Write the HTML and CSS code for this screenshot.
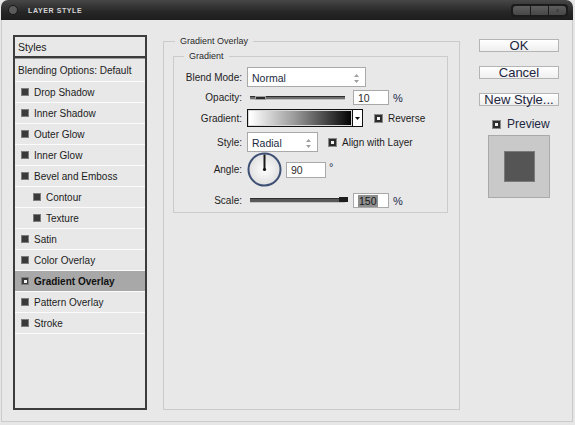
FILE: index.html
```html
<!DOCTYPE html>
<html lang="en">
<head>
  <meta charset="UTF-8" />
  <title>Layer Style</title>
  <link rel="stylesheet" href="styles.css">
</head>
<body>

<div class="window">
  <div class="titlebar">
    <span class="title-dot"></span>
    <span class="title">LAYER STYLE</span>
    <div class="win-buttons">
      <span></span><span></span><span class="close">x</span>
    </div>
  </div>

  <div class="content">

    <!-- effect list -->
    <div class="styles-list">
      <div class="list-head">Styles</div>
      <div class="list-blend">Blending Options: Default</div>
      <div class="list-item"><span class="mark"></span>Drop Shadow</div>
      <div class="list-item"><span class="mark"></span>Inner Shadow</div>
      <div class="list-item"><span class="mark"></span>Outer Glow</div>
      <div class="list-item"><span class="mark"></span>Inner Glow</div>
      <div class="list-item"><span class="mark"></span>Bevel and Emboss</div>
      <div class="list-item sub"><span class="mark"></span>Contour</div>
      <div class="list-item sub"><span class="mark"></span>Texture</div>
      <div class="list-item"><span class="mark"></span>Satin</div>
      <div class="list-item"><span class="mark"></span>Color Overlay</div>
      <div class="list-item active"><span class="mark on"></span>Gradient Overlay</div>
      <div class="list-item"><span class="mark"></span>Pattern Overlay</div>
      <div class="list-item"><span class="mark"></span>Stroke</div>
    </div>

    <fieldset class="group outer">
      <legend>Gradient Overlay</legend>
      <fieldset class="group inner">
        <legend>Gradient</legend>

        <div class="field row-blend">
          <label>Blend Mode:</label>
          <div class="select select-wide">Normal
            <svg class="updown" width="5" height="9" viewBox="0 0 5 9"><path d="M2.5 0L5 3H0zM2.5 9L5 6H0z" fill="#a0a0a0"/></svg>
          </div>
        </div>

        <div class="field row-slider">
          <label>Opacity:</label>
          <div class="track"><span class="thumb"></span></div>
          <div class="num">10</div>
          <span class="unit">%</span>
        </div>

        <div class="field row-gradient">
          <label>Gradient:</label>
          <div class="swatch"></div>
          <div class="swatch-arrow">
            <svg width="5" height="3" viewBox="0 0 5 3"><path d="M0 0h5L2.5 3z" fill="#111"/></svg>
          </div>
          <span class="check on"></span>
          <span class="check-label">Reverse</span>
        </div>

        <div class="field row-style">
          <label>Style:</label>
          <div class="select select-narrow">Radial
            <svg class="updown" width="5" height="9" viewBox="0 0 5 9"><path d="M2.5 0L5 3H0zM2.5 9L5 6H0z" fill="#a0a0a0"/></svg>
          </div>
          <span class="check on check-align"></span>
          <span class="check-label">Align with Layer</span>
        </div>

        <div class="field row-angle">
          <label>Angle:</label>
          <svg class="dial" width="35" height="35" viewBox="0 0 35 35">
            <defs>
              <radialGradient id="dialFill" cx="50%" cy="50%" r="55%">
                <stop offset="0" stop-color="#ffffff"/>
                <stop offset="1" stop-color="#dcdcdc"/>
              </radialGradient>
            </defs>
            <circle cx="17.5" cy="17.5" r="16" fill="url(#dialFill)" stroke="#3e5174" stroke-width="2"/>
            <line x1="17.5" y1="17.5" x2="17.5" y2="2.5" stroke="#1a1a1a" stroke-width="2"/>
            <circle cx="17.5" cy="17.5" r="1.6" fill="#111"/>
          </svg>
          <div class="num num-angle">90</div>
          <span class="degree">°</span>
        </div>

        <div class="field row-slider row-scale">
          <label>Scale:</label>
          <div class="track thick"><span class="thumb thumb-end"></span></div>
          <div class="num"><span class="selected">150</span></div>
          <span class="unit">%</span>
        </div>

      </fieldset>
    </fieldset>

    <!-- dialog buttons and preview -->
    <div class="actions">
      <div class="btn">OK</div>
      <div class="btn">Cancel</div>
      <div class="btn">New Style...</div>
      <div class="preview-toggle"><span class="check on"></span>Preview</div>
      <div class="preview-box"><div class="preview-square"></div></div>
    </div>

  </div>
</div>

</body>
</html>
```

FILE: styles.css
```css
* {
  box-sizing: border-box;
}

html, body {
  margin: 0;
  padding: 0;
}

body {
  background: #e6e6e6;
  font-family: "Liberation Sans", Arial, sans-serif;
  color: #1c1c1c;
  font-size: 10px;
}

.window {
  width: 572px;
  margin-left: 1px;
}

/* dark title strip */
.titlebar {
  height: 20px;
  background: linear-gradient(to bottom, #474747, #262626 60%, #1d1d1d);
  border-radius: 7px 7px 0 0;
  display: flex;
  align-items: center;
  padding-left: 7px;
}

.title-dot {
  width: 10px;
  height: 10px;
  border-radius: 50%;
  background: #5b5b5b;
  border: 1px solid #1a1a1a;
}

.title {
  margin-left: 10px;
  color: #d6d6d6;
  font-size: 7px;
  font-weight: bold;
  letter-spacing: 0.6px;
}

.win-buttons {
  margin-left: auto;
  margin-right: 5px;
  display: flex;
  gap: 1px;
  padding: 2px;
  background: #1b1b1b;
  border-radius: 4px;
}

.win-buttons span {
  width: 17px;
  height: 9px;
  background: linear-gradient(to bottom, #5e5e5e, #474747);
  font-size: 6px;
  line-height: 9px;
  text-align: center;
  color: #2a2a2a;
}

.win-buttons span:first-child {
  border-radius: 3px 0 0 3px;
}

.win-buttons span.close {
  border-radius: 0 3px 3px 0;
}

.content {
  height: 402px;
  background: #e8e8e8;
  border: 1px solid #cbcbcb;
  border-top: none;
  display: flex;
  align-items: flex-start;
  padding: 15px 0 0 11px;
}

/* left effect list */
.styles-list {
  width: 134px;
  height: 375px;
  border: 2px solid #3c3c3c;
  background: #e8e8e8;
}

.list-head {
  height: 21px;
  line-height: 21px;
  padding-left: 3px;
  font-size: 10.5px;
  border-bottom: 2px solid #3c3c3c;
}

.list-blend {
  height: 24px;
  line-height: 24px;
  padding-left: 3px;
  border-top: 1px solid #9a9a9a;
  border-bottom: 1px solid #fbfbfb;
}

.list-item {
  height: 21px;
  display: flex;
  align-items: center;
  padding-left: 6px;
  border-bottom: 1px solid #fbfbfb;
}

.list-item.sub {
  padding-left: 18px;
}

.list-item.active {
  background: #a8a8a8;
  font-weight: bold;
  color: #111;
}

.mark {
  width: 8px;
  height: 8px;
  margin-right: 5px;
  background: #3a3a3a;
  border: 1px solid #7c7c7c;
  display: inline-flex;
  align-items: center;
  justify-content: center;
}

.mark.on::after,
.check.on::after {
  content: "";
  width: 3px;
  height: 3px;
  background: #f2f2f2;
}

/* group boxes */
.group {
  margin: 0;
  min-width: 0;
  border: 1px solid #cbcbcb;
}

.group legend {
  padding: 0 5px;
  font-size: 9px;
  line-height: 12px;
  color: #2a2a2a;
}

.group.outer {
  margin-left: 16px;
  width: 297px;
  height: 375px;
  padding: 3px 11px 0 9px;
}

.group.outer > legend {
  margin-left: 2px;
}

.group.inner {
  width: 275px;
  height: 163px;
  padding: 5px 0 0 0;
}

.group.inner > legend {
  margin-left: 10px;
}

.field {
  display: flex;
  align-items: center;
}

.field label {
  width: 68px;
  margin-right: 5px;
  text-align: right;
  color: #1e1e1e;
}

.row-blend {
  height: 20px;
}

.row-slider {
  height: 17px;
  margin-top: 2px;
}

.row-gradient {
  height: 20px;
  margin-top: 2px;
}

.row-style {
  height: 22px;
  margin-top: 3px;
}

.row-angle {
  height: 33px;
}

.row-scale {
  margin-top: 6px;
}

.select {
  height: 20px;
  background: #fff;
  border: 1px solid #a9a9a9;
  display: flex;
  align-items: center;
  justify-content: space-between;
  padding: 2px 6px 0 4px;
  font-size: 10.5px;
  color: #1a2a40;
}

.select-wide {
  width: 119px;
}

.select-narrow {
  width: 71px;
}

.track {
  position: relative;
  width: 95px;
  height: 4px;
  margin-left: 3px;
  background: #6e6e6e;
  border-top: 1px solid #2e2e2e;
  border-bottom: 1px solid #c4c4c4;
}

.track.thick {
  height: 5px;
  background: #585858;
}

.thumb {
  position: absolute;
  left: 5px;
  top: -1px;
  width: 11px;
  height: 4px;
  background: #2a2a2a;
  border: 1px solid #a0a0a0;
}

.thumb-end {
  left: 89px;
  top: -2px;
  width: 9px;
  height: 5px;
  background: #1e1e1e;
  border: none;
}

.num {
  width: 36px;
  height: 15px;
  margin-left: 8px;
  background: #fff;
  border: 1px solid #a9a9a9;
  padding: 1px 0 0 4px;
  font-size: 10.5px;
  line-height: 12px;
  color: #2a2a2a;
}

.num-angle {
  width: 40px;
  height: 16px;
  margin-left: 4px;
}

.selected {
  background: #8f8f8f;
  color: #1a1a1a;
  padding: 0 1px;
}

.unit {
  margin-left: 4px;
  font-size: 11px;
  color: #1a2a4a;
}

.degree {
  margin-left: 3px;
  margin-top: -6px;
  font-size: 11px;
  color: #1a2a4a;
}

.swatch {
  width: 106px;
  height: 18px;
  border: 1px solid #111;
  box-shadow: inset 0 0 0 1px #d8d8d8;
  background: linear-gradient(to right, #ffffff 2%, #9a9a9a 45%, #000000 100%);
}

.swatch-arrow {
  width: 10px;
  height: 18px;
  background: #fff;
  border: 1px solid #111;
  border-left: none;
  display: flex;
  align-items: center;
  justify-content: center;
}

.check {
  width: 9px;
  height: 9px;
  background: #2c2c2c;
  border: 1px solid #8a8a8a;
  display: inline-flex;
  align-items: center;
  justify-content: center;
}

.row-gradient .check {
  margin-left: 11px;
}

.check-align {
  margin-left: 10px;
}

.check-label {
  margin-left: 5px;
}

/* right column */
.actions {
  margin-left: 19px;
  width: 80px;
  padding-top: 4px;
}

.btn {
  height: 13px;
  margin-bottom: 14px;
  background: linear-gradient(to bottom, #ffffff, #efefef);
  border: 1px solid #b4b4b4;
  text-align: center;
  font-size: 13px;
  line-height: 12px;
  color: #1c2640;
}

.preview-toggle {
  display: flex;
  align-items: center;
  margin-left: 13px;
  margin-top: -3px;
  font-size: 12px;
  color: #1c2640;
}

.preview-toggle .check {
  margin-right: 6px;
}

.preview-box {
  width: 62px;
  height: 63px;
  margin: 4px 0 0 9px;
  background: #c9c9c9;
  border: 1px solid #a9a9a9;
  display: flex;
  align-items: center;
  justify-content: center;
}

.preview-square {
  width: 31px;
  height: 31px;
  background: #555;
  border: 1px solid #7a7a7a;
}
```
